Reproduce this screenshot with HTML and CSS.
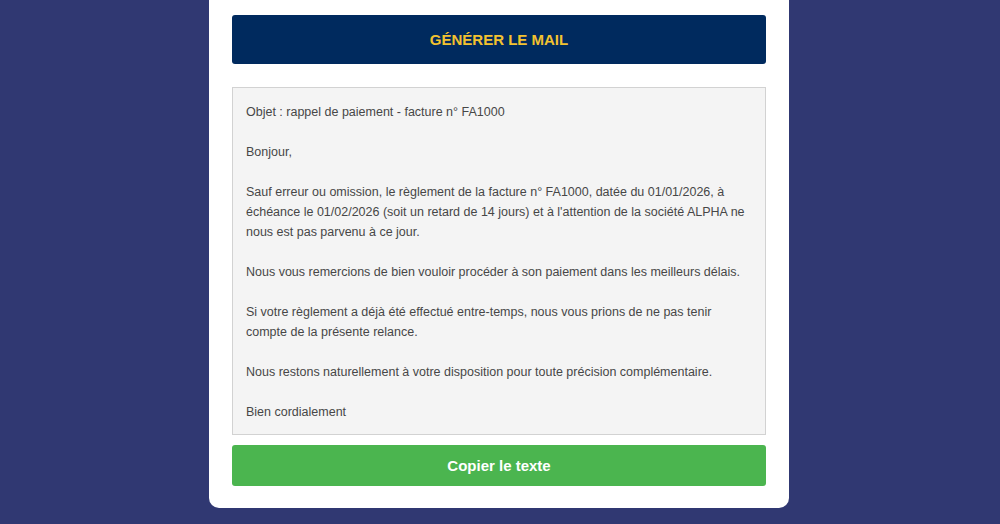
FILE: index.html
```html
<!DOCTYPE html>
<html lang="fr">
<head>
<meta charset="utf-8">
<title>Relance</title>
<link rel="stylesheet" href="styles.css">
</head>
<body>
<div class="card">
  <button class="btn-generate">GÉNÉRER LE MAIL</button>
  <div class="mail">
    <p>Objet : rappel de paiement - facture n° FA1000</p>
    <p>Bonjour,</p>
    <p>Sauf erreur ou omission, le règlement de la facture n° FA1000, datée du 01/01/2026, à échéance le 01/02/2026 (soit un retard de 14 jours) et à l'attention de la société ALPHA ne nous est pas parvenu à ce jour.</p>
    <p>Nous vous remercions de bien vouloir procéder à son paiement dans les meilleurs délais.</p>
    <p>Si votre règlement a déjà été effectué entre-temps, nous vous prions de ne pas tenir compte de la présente relance.</p>
    <p>Nous restons naturellement à votre disposition pour toute précision complémentaire.</p>
    <p>Bien cordialement</p>
  </div>
  <button class="btn-copy">Copier le texte</button>
</div>
</body>
</html>
```
FILE: styles.css
```css
html, body {
  margin: 0;
  padding: 0;
  height: 100%;
}
body {
  background: #303872;
  font-family: "Liberation Sans", Arial, sans-serif;
  display: flex;
  justify-content: center;
  align-items: flex-start;
}
.card {
  width: 580px;
  box-sizing: border-box;
  background: #ffffff;
  padding: 15px 23px 22px;
  border-radius: 0 0 10px 10px;
  display: flex;
  flex-direction: column;
  margin-left: -2px;
}
.btn-generate {
  height: 49px;
  border: none;
  border-radius: 3px;
  background: #002a5e;
  color: #f2c230;
  font-family: "Liberation Sans", Arial, sans-serif;
  font-weight: bold;
  font-size: 15px;
  margin: 0 0 23px;
  padding: 0;
}
.mail {
  background: #f4f4f4;
  border: 1px solid #d2d2d2;
  padding: 14px 13px 13px;
  color: #474747;
  font-size: 12.5px;
  line-height: 20px;
  height: 348px;
  box-sizing: border-box;
}
.mail p {
  margin: 0 0 20px;
}
.mail p:last-child {
  margin-bottom: 0;
}
.btn-copy {
  margin-top: 10px;
  height: 41px;
  border: none;
  border-radius: 3px;
  background: #4bb54f;
  color: #ffffff;
  font-family: "Liberation Sans", Arial, sans-serif;
  font-weight: bold;
  font-size: 15px;
  padding: 0;
}
```
